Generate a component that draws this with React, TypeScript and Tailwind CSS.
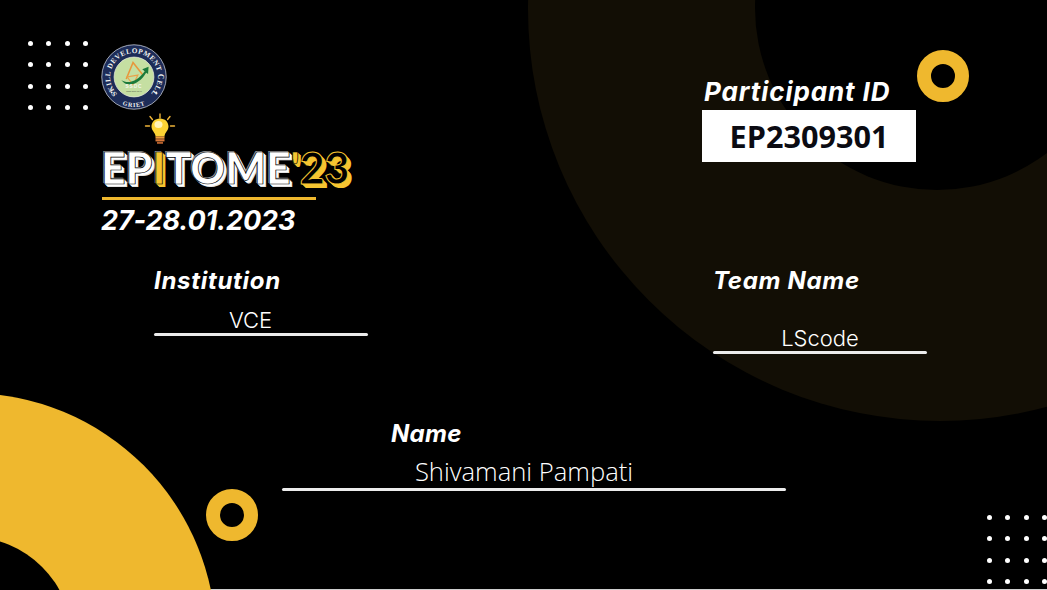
const DOTS = Array.from({ length: 16 }, (_, i) => i);

function DotGrid({ className }: { className: string }) {
  return (
    <div className={`absolute grid grid-cols-4 gap-x-[13.3px] gap-y-[16.4px] ${className}`}>
      {DOTS.map((d) => (
        <span key={d} className="size-[5px] rounded-full bg-white" />
      ))}
    </div>
  );
}

function Ring({ className }: { className: string }) {
  return (
    <div className={`absolute size-[52px] rounded-full border-[14px] border-[#efb82e] bg-black ${className}`} />
  );
}

function Logo() {
  return (
    <svg width="66" height="66" viewBox="0 0 68 68" className="block">
      <circle cx="34" cy="34" r="33.2" fill="#1d2c58" stroke="#c9ced9" strokeWidth="0.8" />
      <circle cx="34" cy="34" r="20.5" fill="#c5dfa2" stroke="#e8ecd8" strokeWidth="0.8" />
      <defs>
        <path id="logoTop" d="M 16.7 51.3 A 24.5 24.5 0 1 1 51.3 51.3" />
        <path id="logoBottom" d="M 19 61.1 A 31 31 0 0 0 49 61.1" />
      </defs>
      <text fontFamily="'Liberation Serif', serif" fontSize="7.4" fontWeight="700" fill="#f1f2f0" letterSpacing="0.5">
        <textPath href="#logoTop" startOffset="50%" textAnchor="middle">SKILL DEVELOPMENT CELL</textPath>
      </text>
      <text fontFamily="'Liberation Serif', serif" fontSize="6.4" fontWeight="700" fill="#f1f2f0" letterSpacing="0.8">
        <textPath href="#logoBottom" startOffset="50%" textAnchor="middle">GRIET</textPath>
      </text>
      <circle cx="11" cy="50" r="1" fill="#f1f2f0" />
      <circle cx="57" cy="50" r="1" fill="#f1f2f0" />
      <path d="M26 36 L33 19 L44 33" fill="none" stroke="#e8963a" strokeWidth="1.6" />
      <path d="M27 34 L33 42 L38 32 Z" fill="none" stroke="#e8a24a" strokeWidth="1.2" />
      <path d="M21 37 C 28 42, 38 38, 45 28 L 42.5 26 L 49 23.5 L 48.5 31 L 46.5 29.5 C 40 41, 27 46, 21 37 Z" fill="#1b7a3a" />
      <text x="34" y="45" textAnchor="middle" fontFamily="'Liberation Sans', sans-serif" fontSize="5" fontWeight="700" letterSpacing="0.9" fill="#f4f6ee">SSDC</text>
      <text x="34" y="49.5" textAnchor="middle" fontFamily="'Liberation Sans', sans-serif" fontSize="2.4" fill="#46523c">www.griet.ac.in</text>
    </svg>
  );
}

function Bulb() {
  return (
    <svg width="32" height="34" viewBox="0 0 32 34" className="block">
      <g stroke="#efb439" strokeWidth="1.4" strokeLinecap="round">
        <path d="M16 1v4" />
        <path d="M6 3.5l2.4 3" />
        <path d="M26 3.5l-2.4 3" />
        <path d="M1.5 13h4" />
        <path d="M26.5 13h4" />
      </g>
      <path d="M16 5.5c-5 0-8.5 3.6-8.5 8 0 3.5 2.6 5.4 3.6 8 .3.8.4 1.5.4 2h9c0-.5.1-1.2.4-2 1-2.6 3.6-4.5 3.6-8 0-4.4-3.5-8-8.5-8z" fill="#fbd234" />
      <ellipse cx="14.5" cy="11.5" rx="4" ry="3.6" fill="#fff3b8" />
      <rect x="11.5" y="23.5" width="9" height="2.2" fill="#ef9a3a" />
      <rect x="11.5" y="26.2" width="9" height="2.2" fill="#d9793a" />
      <rect x="13" y="28.8" width="6" height="2" fill="#b6602c" />
    </svg>
  );
}

function Field({ label, value, className, valueClass }: { label: string; value: string; className: string; valueClass: string }) {
  return (
    <div className={`flex w-[214px] flex-col ${className}`}>
      <span className="font-['Inter',sans-serif] text-[24px] leading-[30px] font-bold tracking-[0.7px] text-white italic">{label}</span>
      <span className={`text-center font-['Inter',sans-serif] text-[22px] leading-[25px] font-light text-white ${valueClass}`}>{value}</span>
      <div className="h-[3px] rounded-full bg-[#ececec]" />
    </div>
  );
}

export default function App() {
  return (
    <div className="relative h-[590px] w-[1047px] overflow-hidden bg-black">
      {/* background shapes */}
      <div className="absolute top-[-403px] left-[528px] size-[824px] rounded-full bg-[#120e05]" />
      <div className="absolute top-[-174px] left-[755px] size-[364px] rounded-full bg-black" />
      <div className="absolute top-[393px] left-[-278px] size-[494px] rounded-full bg-[#efb82e]" />
      <div className="absolute top-[537px] left-[-132px] size-[204px] rounded-full bg-black" />
      <Ring className="top-[50px] left-[917px]" />
      <Ring className="top-[489px] left-[206px]" />
      <DotGrid className="top-[41px] left-[28px]" />
      <DotGrid className="top-[515px] left-[987px]" />

      <div className="relative flex h-[589px] flex-col pt-[44px] pl-[100px]">
        <div className="flex">
          <div className="flex w-[602px] flex-col">
            <div className="ml-px">
              <Logo />
            </div>
            <div className="mt-[3px] ml-[44px]">
              <Bulb />
            </div>
            <div className="mt-[1px] ml-[1px] font-['Lato',sans-serif] text-[43px] leading-[40px] font-black tracking-[-0.1px] whitespace-nowrap text-white [-webkit-text-stroke:0.7px_#000] [text-shadow:-1px_-1px_0_#999,1px_1px_0_#fff,2px_2px_0_#fff,3px_3px_0_#e4e4e4]">
              EP<span className="text-[#f6c531] [text-shadow:-1px_-1px_0_#999,1px_1px_0_#f6c531,2px_2px_0_#f6c531,3px_3px_0_#f6c531]">I</span>TOME
              <span className="text-[#f6c531] [text-shadow:1px_1px_0_#f6c531,2px_2px_0_#f6c531,3px_3px_0_#f6c531]">'</span>
              <span className="text-black [-webkit-text-stroke:1px_#f6c531] [text-shadow:1px_1px_0_#f6c531,2px_2px_0_#f6c531,3px_3px_0_#f6c531,4px_4px_0_#f6c531]">23</span>
            </div>
            <div className="mt-[9px] ml-[2px] h-[3px] w-[214px] bg-[#efb82e]" />
            <span className="mt-[4px] ml-[1px] font-['Inter',sans-serif] text-[27px] leading-[34px] font-bold tracking-[-0.1px] text-white italic">27-28.01.2023</span>
            <Field label="Institution" value="VCE" className="mt-[28px] ml-[54px]" valueClass="mt-[12px] pr-[21px]" />
          </div>
          <div className="flex flex-col">
            <span className="mt-[31px] ml-[2px] font-['Inter',sans-serif] text-[26px] leading-[34px] font-bold tracking-[0.9px] whitespace-nowrap text-white italic">Participant ID</span>
            <div className="mt-px h-[52px] w-[214px] bg-white text-center font-['Open_Sans',sans-serif] text-[30.6px] leading-[52px] font-bold text-[#0b0b12]">EP2309301</div>
            <Field label="Team Name" value="LScode" className="mt-[104px] ml-[11px]" valueClass="mt-[30px]" />
          </div>
        </div>
        <div className="mt-[65px] ml-[182px] flex w-[504px] flex-col">
          <span className="ml-[109px] font-['Inter',sans-serif] text-[24px] leading-[30px] font-bold tracking-[0.3px] text-white italic">Name</span>
          <span className="mt-[7px] pr-[20px] text-center font-['Open_Sans',sans-serif] text-[25.6px] leading-[32px] font-light text-white">Shivamani Pampati</span>
          <div className="h-[3px] rounded-full bg-[#ececec]" />
        </div>
      </div>
      <div className="h-px bg-[#cfcfcf]" />
    </div>
  );
}
